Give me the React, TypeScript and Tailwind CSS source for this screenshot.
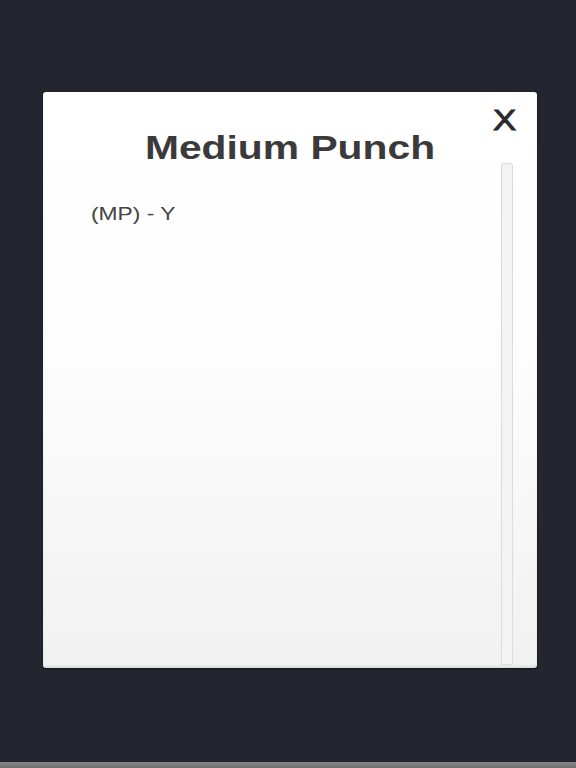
export default function App() {
  return (
    <div className="flex h-[768px] w-[576px] flex-col overflow-hidden bg-[#23262f] font-['Liberation_Sans',Arial,sans-serif]">
      <div className="flex flex-1 flex-col pl-[43px] pt-[92px]">
        {/* Move detail panel */}
        <div className="relative flex h-[576px] w-[494px] flex-col rounded-[3px] bg-gradient-to-b from-white via-[#fcfcfc] to-[#f1f1f1] shadow-[0_1px_2px_rgba(0,0,0,0.6),inset_0_-2px_2px_rgba(0,0,0,0.08)]">
          <h1 className="origin-center scale-x-[1.2] pt-[39px] text-center text-[34px] font-bold leading-[32px] text-[#3a3a3a]">
            Medium Punch
          </h1>
          <button className="absolute right-[23px] top-[14px] origin-center scale-x-[1.2] text-[29px] leading-[29px] text-[#2b2b2b] [-webkit-text-stroke:0.9px_#2b2b2b]">
            X
          </button>
          <div className="flex flex-1 pl-[48px] pr-[24px]">
            <div className="flex-1">
              <p className="mt-[39px] origin-left scale-x-[1.2] text-[19px] leading-[24px] text-[#444444]">
                (MP) - Y
              </p>
            </div>
            <div className="mb-[3px] w-[12px] rounded-t-[3px] border border-[#dcdcdc] bg-[#f3f3f3]" />
          </div>
        </div>
      </div>
      <div className="h-[6px] bg-gradient-to-b from-[#8a8a8a] to-[#6e6e6e]" />
    </div>
  );
}
